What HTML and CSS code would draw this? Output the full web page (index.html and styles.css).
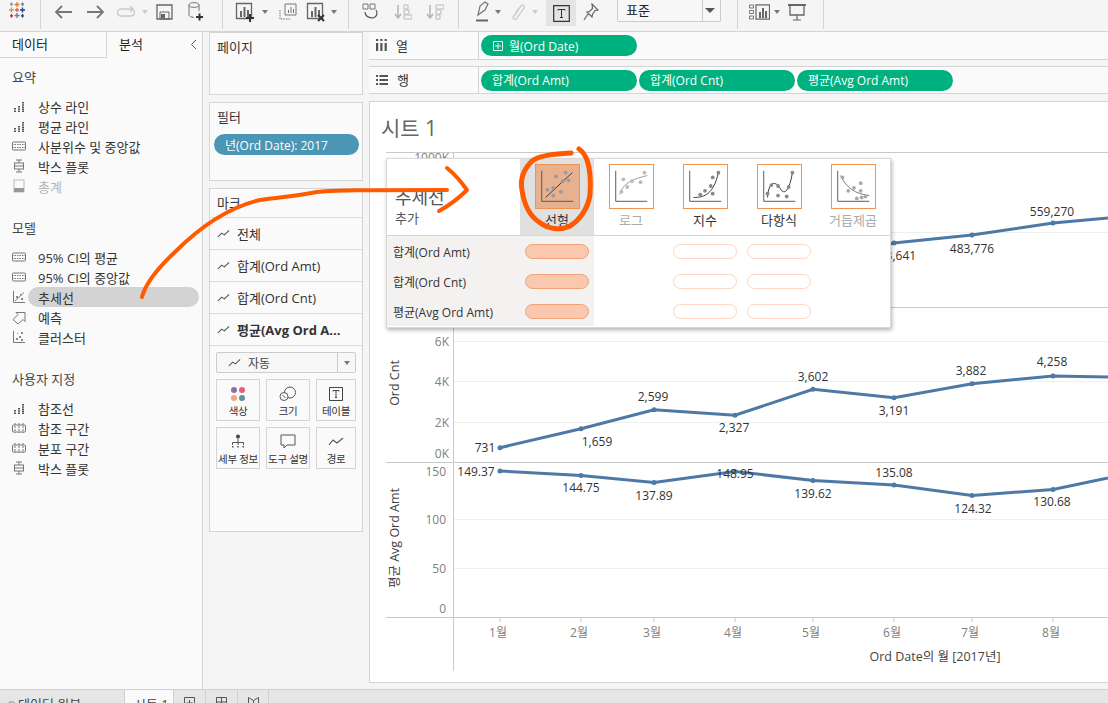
FILE: index.html
```html
<!DOCTYPE html>
<html lang="ko">
<head>
<meta charset="utf-8">
<title>시트 1</title>
<link rel="stylesheet" href="styles.css">
</head>
<body>
<svg class="defs" width="0" height="0">
  <symbol id="bars" viewBox="0 0 14 14"><path d="M2 9h2v1.500H2zM2 11.500h2V13H2zM6 7h2v1.500H6zM6 9.300h2v1.500H6zM6 11.500h2V13H6zM10 3h2v1.500h-2zM10 5.200h2v1.500h-2zM10 7.400h2v1.500h-2zM10 9.500h2V11h-2zM10 11.500h2V13h-2z" fill="#555"/></symbol>
  <symbol id="band" viewBox="0 0 14 14"><rect x="0.500" y="3" width="13" height="8" rx="1" fill="none" stroke="#777"/><path d="M0 5.500h14M0 8.500h14" stroke="#777" stroke-dasharray="1.500 1"/></symbol>
  <symbol id="ref2" viewBox="0 0 14 14"><rect x="0.500" y="4" width="13" height="7" rx="1" fill="none" stroke="#777"/><path d="M3 2v10M7 2v10M11 2v10" stroke="#777" stroke-dasharray="2 1"/></symbol>
  <symbol id="box" viewBox="0 0 14 14"><path d="M7 1v3M7 10v3M4 1h6M4 13h6" stroke="#777" fill="none"/><rect x="2.500" y="4" width="9" height="6" fill="none" stroke="#777"/><path d="M2.500 7h9" stroke="#777"/></symbol>
  <symbol id="trend" viewBox="0 0 14 14"><path d="M1.500 1v11.500H13" fill="none" stroke="#777"/><path d="M3 11L12 2.500" stroke="#777"/><path d="M4 6h2v2H4zM9 8h2v2H9zM8 4h1.500v1.500H8z" fill="#888"/></symbol>
  <symbol id="fore" viewBox="0 0 14 14"><path d="M1 9.500L6 4.500 4 2.500h9v9l-2-2-5 4.500z" fill="none" stroke="#777"/></symbol>
  <symbol id="cluster" viewBox="0 0 14 14"><path d="M1.500 1v11.500H13" fill="none" stroke="#777"/><path d="M4 8h2v2H4zM7 6h2v2H7zM9 2h2v2H9zM5 3h1v1H5zM9 9h2v2H9z" fill="#888"/></symbol>
  <symbol id="total" viewBox="0 0 14 14"><rect x="2" y="1" width="10" height="12" fill="none" stroke="#bbb"/><rect x="2" y="9" width="10" height="4" fill="#999"/></symbol>
  <symbol id="spark" viewBox="0 0 14 10"><path d="M1 8l4-4 3 2 5-5" fill="none" stroke="#555" stroke-width="1.100"/></symbol>
  <symbol id="scatter" viewBox="0 0 45 45"><path d="M6 6v32h33" fill="none" stroke="#555"/></symbol>
  <symbol id="chartbase" viewBox="0 0 20 20"><path d="M1.500 1.500h15v15h-15z" fill="none" stroke="#666" stroke-width="1.300"/><path d="M5 9h2v6H5zM8.500 5h2v10h-2zM12 8h2v7h-2z" fill="#666"/></symbol>
</svg>

<div class="app">
  <header class="toolbar">
    <div class="tgroup tg-logo">
      <svg class="logo" width="18" height="18" viewBox="0 0 18 18" stroke-width="1.300" fill="none">
        <path d="M9 1v5M6.500 3.500h5" stroke="#e8762d"/><path d="M9 12v5M6.500 14.500h5" stroke="#5b879b"/>
        <path d="M3.500 6.500v5M1 9h5" stroke="#eb912c"/><path d="M14.500 6.500v5M12 9h5" stroke="#1f447f"/>
        <path d="M14.500 1.500v3.500M13 3.200h3" stroke="#59879b"/><path d="M3.500 1.500v3.500M2 3.200h3" stroke="#7099a6"/>
        <path d="M3.500 13v3.500M2 14.800h3" stroke="#c72035"/><path d="M14.500 13v3.500M13 14.800h3" stroke="#1f447f"/>
        <path d="M9 7v4M7 9h4" stroke="#e15759"/>
      </svg>
    </div>
    <div class="tgroup tg-file">
      <span class="tool"><svg width="20" height="16" viewBox="0 0 20 16"><path d="M18 8H2M8 2L2 8l6 6" fill="none" stroke="#777" stroke-width="1.800"/></svg></span>
      <span class="tool"><svg width="20" height="16" viewBox="0 0 20 16"><path d="M2 8h16M12 2l6 6-6 6" fill="none" stroke="#777" stroke-width="1.800"/></svg></span>
      <span class="tool"><svg width="20" height="14" viewBox="0 0 20 14"><path d="M15 4H5a3.500 3.500 0 000 7h10a3.500 3.500 0 000-7M14 1l3 3-3 3" fill="none" stroke="#c9c9c9" stroke-width="1.300"/></svg></span>
      <i class="caret faint"></i>
      <span class="tool"><svg width="17" height="16" viewBox="0 0 17 16"><path d="M1 1h15v14H1z" fill="none" stroke="#666" stroke-width="1.300"/><path d="M4 8h9v7H4z" fill="none" stroke="#666"/><path d="M5 10h4v4H5z" fill="#666"/></svg></span>
      <span class="tool"><svg width="16" height="20" viewBox="0 0 16 20"><ellipse cx="6" cy="3" rx="5" ry="2.300" fill="none" stroke="#777"/><path d="M1 3v10c0 1.300 2 2.300 5 2.300M11 3v6" fill="none" stroke="#777"/><path d="M8 15h7M11.500 11.500v7" stroke="#333" stroke-width="2"/></svg></span>
    </div>
    <div class="tgroup tg-sheet">
      <span class="tool"><svg width="20" height="20" viewBox="0 0 20 20"><use href="#chartbase" width="20" height="20"/><path d="M11 16h8M15 12v8" stroke="#333" stroke-width="2"/></svg></span>
      <i class="caret"></i>
      <span class="tool t-gap"><svg width="18" height="18" viewBox="0 0 18 18"><path d="M6 1h11v11H6z" fill="#f5f5f5" stroke="#777"/><path d="M9 7h1v3H9zM11.500 4h1v6h-1zM14 6h1v4h-1z" fill="#777"/><path d="M1 7v9h11" fill="none" stroke="#777" stroke-dasharray="1.500 1"/></svg></span>
      <span class="tool t-narrow"><svg width="20" height="20" viewBox="0 0 20 20"><use href="#chartbase" width="20" height="20"/><path d="M12 13l6 6M18 13l-6 6" stroke="#333" stroke-width="2"/></svg></span>
      <i class="caret"></i>
    </div>
    <div class="tgroup tg-sort">
      <span class="tool"><svg width="18" height="18" viewBox="0 0 18 18"><path d="M1 1h5v5H1zM8 1h5v5H8z" fill="none" stroke="#777"/><path d="M3 9c0 5 5 6 9 6M14 7c2 3 1 7-3 8" fill="none" stroke="#555" stroke-width="1.200"/></svg></span>
      <span class="tool"><svg width="18" height="16" viewBox="0 0 18 16"><path d="M4 1v12M1 10l3 4 3-4" fill="none" stroke="#b5b5b5" stroke-width="1.500"/><path d="M10 1h4v4h-4zM10 6h5v4h-5zM10 11h8v4h-8z" fill="none" stroke="#bbb"/></svg></span>
      <span class="tool"><svg width="18" height="16" viewBox="0 0 18 16"><path d="M4 1v12M1 10l3 4 3-4" fill="none" stroke="#b5b5b5" stroke-width="1.500"/><path d="M10 1h8v4h-8zM10 6h5v4h-5zM10 11h4v4h-4z" fill="none" stroke="#bbb"/></svg></span>
    </div>
    <div class="tgroup tg-format">
      <span class="tool"><svg width="14" height="21" viewBox="0 0 14 21"><path d="M3 14L5 5l5-4 3 2-3 6z" fill="none" stroke="#777" stroke-width="1.200"/><path d="M1 19.500h12" stroke="#666" stroke-width="2"/></svg></span>
      <i class="caret"></i>
      <span class="tool"><svg width="14" height="19" viewBox="0 0 14 19"><path d="M4 8l5-6c2-2 4 0 3 2L5 14c-1 2-4 2-4-1l6-8" fill="none" stroke="#c9c9c9" stroke-width="1.300" transform="translate(0 2)"/></svg></span>
      <i class="caret faint"></i>
      <span class="tool t-active"><svg width="17" height="17" viewBox="0 0 17 17"><path d="M.700.700h15.600v15.600H.700z" fill="none" stroke="#333" stroke-width="1.200"/><path d="M5 5.500V4.500h7v1M8.500 4.500v8M7 12.500h3" fill="none" stroke="#333"/></svg></span>
      <span class="tool t-pin"><svg width="16" height="18" viewBox="0 0 16 18"><path d="M9 1l6 6-3 .5-2.500 4L9 14 4 9l2.500-.5 3-3zM5 11l-4 6" fill="none" stroke="#666" stroke-width="1.200"/></svg></span>
      <div class="select"><span class="select-value">표준</span><span class="select-arrow"><i class="caret dark"></i></span></div>
    </div>
    <div class="tgroup tg-show">
      <span class="tool t-show"><svg width="21" height="16" viewBox="0 0 21 16"><path d="M.500 1h4v3h-4zM.500 6.500h4v3h-4zM.500 12h4v3h-4z" fill="none" stroke="#777"/><path d="M7 .800h13.500v14.400H7z" fill="none" stroke="#666" stroke-width="1.200"/><path d="M10 8h2v6h-2zM13 4h2v10h-2zM16 7h2v7h-2z" fill="#666"/></svg></span>
      <i class="caret"></i>
      <span class="tool t-present"><svg width="18" height="18" viewBox="0 0 18 18"><path d="M0 2h18" stroke="#666" stroke-width="2"/><path d="M2 2v10h14V2" fill="none" stroke="#666" stroke-width="1.300"/><path d="M9 12v5M5 17h8" stroke="#666" stroke-width="1.200"/></svg></span>
    </div>
  </header>

  <main class="main">
    <aside class="analytics">
      <div class="tabs">
        <div class="tab tab-data">데이터</div>
        <div class="tab tab-active">분석<svg class="collapse" width="7" height="11" viewBox="0 0 7 11"><path d="M6 1L1.500 5.500 6 10" fill="none" stroke="#555"/></svg></div>
      </div>
      <section class="a-sec">
        <h3 class="a-head">요약</h3>
        <ul class="a-list">
          <li class="a-item"><svg class="a-ic"><use href="#bars"/></svg>상수 라인</li>
          <li class="a-item"><svg class="a-ic"><use href="#bars"/></svg>평균 라인</li>
          <li class="a-item"><svg class="a-ic"><use href="#band"/></svg>사분위수 및 중앙값</li>
          <li class="a-item"><svg class="a-ic"><use href="#box"/></svg>박스 플롯</li>
          <li class="a-item a-off"><svg class="a-ic"><use href="#total"/></svg>총계</li>
        </ul>
      </section>
      <section class="a-sec">
        <h3 class="a-head">모델</h3>
        <ul class="a-list">
          <li class="a-item"><svg class="a-ic"><use href="#band"/></svg>95% CI의 평균</li>
          <li class="a-item"><svg class="a-ic"><use href="#band"/></svg>95% CI의 중앙값</li>
          <li class="a-item a-hover"><svg class="a-ic"><use href="#trend"/></svg>추세선</li>
          <li class="a-item"><svg class="a-ic"><use href="#fore"/></svg>예측</li>
          <li class="a-item"><svg class="a-ic"><use href="#cluster"/></svg>클러스터</li>
        </ul>
      </section>
      <section class="a-sec">
        <h3 class="a-head">사용자 지정</h3>
        <ul class="a-list">
          <li class="a-item"><svg class="a-ic"><use href="#bars"/></svg>참조선</li>
          <li class="a-item"><svg class="a-ic"><use href="#ref2"/></svg>참조 구간</li>
          <li class="a-item"><svg class="a-ic"><use href="#ref2"/></svg>분포 구간</li>
          <li class="a-item"><svg class="a-ic"><use href="#box"/></svg>박스 플롯</li>
        </ul>
      </section>
    </aside>

    <div class="cards">
      <section class="card card-pages"><h4 class="card-title">페이지</h4></section>
      <section class="card card-filter">
        <h4 class="card-title">필터</h4>
        <div class="pill pill-filter">년(Ord Date): 2017</div>
      </section>
      <section class="card card-marks">
        <h4 class="card-title marks-title">마크</h4>
        <div class="mark-row"><svg class="spark"><use href="#spark"/></svg>전체</div>
        <div class="mark-row"><svg class="spark"><use href="#spark"/></svg>합계(Ord Amt)</div>
        <div class="mark-row"><svg class="spark"><use href="#spark"/></svg>합계(Ord Cnt)</div>
        <div class="mark-row mark-bold"><svg class="spark"><use href="#spark"/></svg>평균(Avg Ord A...</div>
        <div class="mark-body">
          <div class="mark-select"><span class="ms-value"><svg class="spark"><use href="#spark"/></svg>자동</span><span class="ms-arrow"><i class="caret"></i></span></div>
          <div class="mark-btns">
            <div class="mbtn">
              <svg width="16" height="16" viewBox="0 0 16 16"><circle cx="4" cy="4" r="3" fill="#8a6fa0"/><circle cx="12" cy="4" r="3" fill="#e5616b"/><circle cx="4" cy="12" r="3" fill="#eda77a"/><circle cx="12" cy="12" r="3" fill="#5f929d"/></svg>
              <span>색상</span>
            </div>
            <div class="mbtn">
              <svg width="18" height="16" viewBox="0 0 18 16"><circle cx="11" cy="6.500" r="5.500" fill="none" stroke="#555"/><circle cx="5" cy="10.500" r="4" fill="#fafafa" stroke="#555"/><path d="M3.500 9l3 3" stroke="#555"/></svg>
              <span>크기</span>
            </div>
            <div class="mbtn">
              <svg width="16" height="16" viewBox="0 0 16 16"><path d="M1.500 1.500h13v13h-13z" fill="none" stroke="#444"/><path d="M5 5.500V4.500h6v1M8 4.500v7M7 11.500h2" fill="none" stroke="#444"/></svg>
              <span>테이블</span>
            </div>
            <div class="mbtn">
              <svg width="14" height="16" viewBox="0 0 14 16"><circle cx="7" cy="2.500" r="2" fill="#444"/><path d="M7 4.500v4M1.500 11V8.500h11V11M7 8.500V11" fill="none" stroke="#555"/><path d="M1 12h1.500v1.500H1zM6.200 12h1.500v1.500H6.200zM11.500 12H13v1.500h-1.500z" fill="#555"/></svg>
              <span>세부 정보</span>
            </div>
            <div class="mbtn">
              <svg width="16" height="16" viewBox="0 0 16 16"><path d="M1 1h14v10H7l-3 3v-3H1z" fill="none" stroke="#555"/></svg>
              <span>도구 설명</span>
            </div>
            <div class="mbtn">
              <svg width="16" height="16" viewBox="0 0 16 12"><path d="M1 9l4-5 4 3 6-5" fill="none" stroke="#555" stroke-width="1.100"/></svg>
              <span>경로</span>
            </div>
          </div>
        </div>
      </section>
    </div>

    <div class="workspace">
      <div class="shelf shelf-col">
        <div class="shelf-label"><svg width="11" height="12" viewBox="0 0 11 12"><path d="M0 4h2.200v8H0zM4.300 4h2.200v8H4.300zM8.600 4h2.200v8H8.600zM0 0h2.200v2H0zM4.300 0h2.200v2H4.300zM8.600 0h2.200v2H8.600z" fill="#555"/></svg><span>열</span></div>
        <div class="shelf-pills"><div class="pill pill-green"><svg class="plus" width="10" height="10" viewBox="0 0 10 10"><path d="M.500.500h9v9h-9zM5 2v6M2 5h6" fill="none" stroke="#e8f5f1"/></svg>월(Ord Date)</div></div>
      </div>
      <div class="shelf shelf-row">
        <div class="shelf-label"><svg width="12" height="10" viewBox="0 0 12 10"><path d="M0 0h2v2H0zM0 4h2v2H0zM0 8h2v2H0zM3.500 0H12v2H3.500zM3.500 4H12v2H3.500zM3.500 8H12v2H3.500z" fill="#555"/></svg><span>행</span></div>
        <div class="shelf-pills">
          <div class="pill pill-green">합계(Ord Amt)</div>
          <div class="pill pill-green">합계(Ord Cnt)</div>
          <div class="pill pill-green">평균(Avg Ord Amt)</div>
        </div>
      </div>

      <section class="view">
        <h2 class="sheet-title">시트 1</h2>
        <svg class="chart" viewBox="370 147 738 535" width="738" height="535">
          <g class="grid">
            <path d="M454 232.500H1108M454 341.500H1108M454 381.500H1108M454 422.500H1108M454 519.500H1108M454 568.500H1108"/>
          </g>
          <g class="axis">
            <path d="M386 152.500H1108M386 307.500H1108M386 462.500H1108M386 617.500H1108M453.500 152V671"/>
            <path d="M500 617v5M581 617v5M654 617v5M735 617v5M813 617v5M894 617v5M972 617v5M1053 617v5"/>
          </g>
          <g class="ticks">
            <text x="449" y="162" text-anchor="end">1000K</text>
            <text x="449" y="346" text-anchor="end">6K</text>
            <text x="449" y="386" text-anchor="end">4K</text>
            <text x="449" y="427" text-anchor="end">2K</text>
            <text x="449" y="458" text-anchor="end">0K</text>
            <text x="446" y="476" text-anchor="end">150</text>
            <text x="446" y="524" text-anchor="end">100</text>
            <text x="446" y="573" text-anchor="end">50</text>
            <text x="446" y="613" text-anchor="end">0</text>
            <text x="498" y="637" text-anchor="middle">1월</text>
            <text x="579" y="637" text-anchor="middle">2월</text>
            <text x="652" y="637" text-anchor="middle">3월</text>
            <text x="733" y="637" text-anchor="middle">4월</text>
            <text x="811" y="637" text-anchor="middle">5월</text>
            <text x="892" y="637" text-anchor="middle">6월</text>
            <text x="970" y="637" text-anchor="middle">7월</text>
            <text x="1051" y="637" text-anchor="middle">8월</text>
          </g>
          <g class="axis-title">
            <text x="935" y="661" text-anchor="middle">Ord Date의 월 [2017년]</text>
            <text transform="translate(399 383) rotate(-90)" text-anchor="middle">Ord Cnt</text>
            <text transform="translate(399 538) rotate(-90)" text-anchor="middle">평균 Avg Ord Amt</text>
          </g>
          <g class="series">
            <path d="M810 262L894 243 972 235 1053 223 1108 218"/>
            <path d="M500 447.700L581 428.800 654 409.700 735 415.200 813 389.300 894 397.700 972 383.700 1053 376 1108 377"/>
            <path d="M500 471L581 475.600 654 482.400 735 471.500 813 480.500 894 485 972 495.500 1053 489.500 1108 478"/>
          </g>
          <g class="dots">
            <circle cx="894" cy="243" r="2.500"/><circle cx="972" cy="235" r="2.500"/><circle cx="1053" cy="223" r="2.500"/>
            <circle cx="500" cy="447.700" r="2.500"/><circle cx="581" cy="428.800" r="2.500"/><circle cx="654" cy="409.700" r="2.500"/><circle cx="735" cy="415.200" r="2.500"/><circle cx="813" cy="389.300" r="2.500"/><circle cx="894" cy="397.700" r="2.500"/><circle cx="972" cy="383.700" r="2.500"/><circle cx="1053" cy="376" r="2.500"/>
            <circle cx="500" cy="471" r="2.500"/><circle cx="581" cy="475.600" r="2.500"/><circle cx="654" cy="482.400" r="2.500"/><circle cx="735" cy="471.500" r="2.500"/><circle cx="813" cy="480.500" r="2.500"/><circle cx="894" cy="485" r="2.500"/><circle cx="972" cy="495.500" r="2.500"/><circle cx="1053" cy="489.500" r="2.500"/>
          </g>
          <g class="labels">
            <text x="894" y="260" text-anchor="middle">483,641</text>
            <text x="972" y="253" text-anchor="middle">483,776</text>
            <text x="1052" y="216" text-anchor="middle">559,270</text>
            <text x="485" y="452" text-anchor="middle">731</text>
            <text x="597" y="446" text-anchor="middle">1,659</text>
            <text x="653" y="401" text-anchor="middle">2,599</text>
            <text x="734" y="432" text-anchor="middle">2,327</text>
            <text x="813" y="381" text-anchor="middle">3,602</text>
            <text x="894" y="415" text-anchor="middle">3,191</text>
            <text x="971" y="375" text-anchor="middle">3,882</text>
            <text x="1052" y="366" text-anchor="middle">4,258</text>
            <text x="476" y="476" text-anchor="middle">149.37</text>
            <text x="581" y="492" text-anchor="middle">144.75</text>
            <text x="654" y="500" text-anchor="middle">137.89</text>
            <text x="735" y="478" text-anchor="middle">148.95</text>
            <text x="813" y="498" text-anchor="middle">139.62</text>
            <text x="894" y="477" text-anchor="middle">135.08</text>
            <text x="973" y="513" text-anchor="middle">124.32</text>
            <text x="1052" y="506" text-anchor="middle">130.68</text>
          </g>
        </svg>

        <div class="popover">
          <div class="pop-head">
            <div class="pop-title"><div class="pop-t1">추세선</div><div class="pop-t2">추가</div></div>
            <div class="pop-type pop-selected">
              <svg class="tile tile-on" viewBox="0 0 45 45"><use href="#scatter"/><path d="M10 34L38 8" stroke="#333" fill="none"/><g fill="#999"><circle cx="12" cy="26" r="2"/><circle cx="18" cy="24" r="2"/><circle cx="18" cy="32" r="2"/><circle cx="21" cy="12" r="2"/><circle cx="31" cy="8" r="2"/><circle cx="28" cy="17" r="2"/><circle cx="34" cy="16" r="2"/><circle cx="26" cy="28" r="2"/></g></svg>
              <span class="pop-label">선형</span>
            </div>
            <div class="pop-type pop-dim">
              <svg class="tile" viewBox="0 0 45 45"><use href="#scatter"/><path d="M10 31C14 18 24 15 39 11" stroke="#999" fill="none"/><g fill="#bbb"><circle cx="12" cy="28" r="2"/><circle cx="18" cy="23" r="2"/><circle cx="14" cy="15" r="2"/><circle cx="23" cy="17" r="2"/><circle cx="32" cy="18" r="2"/><circle cx="36" cy="8" r="2"/></g></svg>
              <span class="pop-label">로그</span>
            </div>
            <div class="pop-type">
              <svg class="tile" viewBox="0 0 45 45"><use href="#scatter"/><path d="M10 34C22 34 31 30 36 8" stroke="#333" fill="none"/><g fill="#888"><circle cx="17" cy="31" r="2"/><circle cx="22" cy="27" r="2"/><circle cx="28" cy="22" r="2"/><circle cx="30" cy="13" r="2"/><circle cx="36" cy="8" r="2"/><circle cx="30" cy="30" r="2"/></g></svg>
              <span class="pop-label">지수</span>
            </div>
            <div class="pop-type">
              <svg class="tile" viewBox="0 0 45 45"><use href="#scatter"/><path d="M10 34C11 15 20 17 24 26C30 33 34 20 36 8" stroke="#333" fill="none"/><g fill="#888"><circle cx="10" cy="30" r="2"/><circle cx="14" cy="21" r="2"/><circle cx="21" cy="22" r="2"/><circle cx="21" cy="32" r="2"/><circle cx="30" cy="33" r="2"/><circle cx="32" cy="23" r="2"/><circle cx="36" cy="8" r="2"/></g></svg>
              <span class="pop-label">다항식</span>
            </div>
            <div class="pop-type pop-dim">
              <svg class="tile" viewBox="0 0 45 45"><use href="#scatter"/><path d="M9 11C15 24 24 30 39 32" stroke="#777" fill="none"/><g fill="#aaa"><circle cx="11" cy="13" r="2"/><circle cx="17" cy="27" r="2"/><circle cx="23" cy="24" r="2"/><circle cx="30" cy="19" r="2"/><circle cx="26" cy="35" r="2"/><circle cx="31" cy="34" r="2"/><circle cx="35" cy="33" r="2"/><circle cx="30" cy="27" r="2"/></g></svg>
              <span class="pop-label">거듭제곱</span>
            </div>
          </div>
          <div class="pop-body">
            <div class="pop-row"><div class="pop-name">합계(Ord Amt)</div><div class="pop-cell pop-shade"><i class="tp tp-on"></i></div><div class="pop-cell"></div><div class="pop-cell"><i class="tp"></i></div><div class="pop-cell"><i class="tp"></i></div><div class="pop-cell"></div></div>
            <div class="pop-row"><div class="pop-name">합계(Ord Cnt)</div><div class="pop-cell pop-shade"><i class="tp tp-on"></i></div><div class="pop-cell"></div><div class="pop-cell"><i class="tp"></i></div><div class="pop-cell"><i class="tp"></i></div><div class="pop-cell"></div></div>
            <div class="pop-row"><div class="pop-name">평균(Avg Ord Amt)</div><div class="pop-cell pop-shade"><i class="tp tp-on"></i></div><div class="pop-cell"></div><div class="pop-cell"><i class="tp"></i></div><div class="pop-cell"><i class="tp"></i></div><div class="pop-cell"></div></div>
          </div>
        </div>
      </section>
    </div>
  </main>

  <footer class="statusbar">
    <div class="sb-source"><svg width="7" height="12" viewBox="0 0 11 12"><ellipse cx="5.500" cy="3" rx="4.500" ry="2" fill="none" stroke="#555"/><path d="M1 3v7h9V3" fill="none" stroke="#555"/></svg>데이터 원본</div>
    <div class="sb-tab">시트 1</div>
    <div class="sb-icon"><svg width="11" height="12" viewBox="0 0 11 12"><path d="M.500.500h10v11H.500zM5.500 3v6M2.500 6h6" fill="none" stroke="#555"/></svg></div>
    <div class="sb-icon"><svg width="11" height="12" viewBox="0 0 11 12"><path d="M.500.500h10v11H.500zM5.500.500v11M.500 5h10" fill="none" stroke="#555"/></svg></div>
    <div class="sb-icon"><svg width="11" height="12" viewBox="0 0 11 12"><path d="M.500.500l5 3 5-3v11h-10zM5.500 3.500v8" fill="none" stroke="#555"/></svg></div>
  </footer>

  <svg class="ink" width="1108" height="703" viewBox="0 0 1108 703">
    <path d="M142 297C146 282 160 266 175 252C195 232 225 208 260 200C280 197 290 197 317 192C340 190 360 190 447 190"/>
    <path d="M447 168C456 175 462 183 467 190C460 197 450 205 439 211"/>
    <path class="ink-ring" d="M571 153C555 154 540 155 532 161C523 170 520 180 522 190C524 204 530 216 539 222C548 229 560 231 570 226C580 220 588 208 590 195C591 180 590 168 587 160C585 155 582 151 579 149"/>
  </svg>
</div>
</body>
</html>
```

FILE: styles.css
```css
* { box-sizing: border-box; }
html, body { margin: 0; padding: 0; overflow: hidden; }
body {
  font-family: "Open Sans", "Noto Sans CJK KR", sans-serif;
  font-size: 12px;
  color: #333;
  background: #f5f5f5;
}
.defs { position: absolute; }
h2, h3, h4, ul { margin: 0; padding: 0; font-weight: 400; list-style: none; }

.app { position: relative; width: 1108px; height: 703px; display: flex; flex-direction: column; overflow: hidden; }

/* toolbar */
.toolbar { height: 32px; flex: none; display: flex; align-items: flex-start; background: #f5f5f5; border-bottom: 1px solid #d4d4d4; }
.tgroup { height: 29px; display: flex; align-items: flex-start; border-right: 1px solid #d4d4d4; }
.tool { width: 31px; height: 23px; flex: none; display: flex; align-items: center; justify-content: center; }
.caret { width: 0; height: 0; flex: none; border: 3.500px solid transparent; border-top: 4px solid #777; border-bottom: 0; margin-top: 10px; }
.caret.faint { border-top-color: #c9c9c9; }
.caret.dark { border-top-color: #555; border-width: 5px 5px 0; margin-top: 0; }
.tg-logo { width: 41px; padding: 1px 0 0 8px; }
.tg-file { width: 182px; padding-left: 7px; }
.tg-file .caret { margin-left: 1px; margin-right: 1px; }
.tg-sheet { width: 126px; padding-left: 6px; }
.tg-sheet .t-gap { margin-left: 2px; }
.tg-sheet .t-narrow { width: 26px; }
.tg-sheet .caret { margin: 10px 2px 0; }
.tg-sort { width: 110px; padding-left: 6px; gap: 1px; }
.tg-format { width: 279px; padding-left: 7px; }
.tg-format .caret { margin-left: -2px; margin-right: 2px; }
.tg-format .t-active { width: 30px; height: 26px; background: #e4e4e4; margin-left: 6px; }
.tg-format .t-pin { width: 29px; }
.select { width: 104px; height: 22px; margin-left: 12px; display: flex; background: #f7f7f7; border: 1px solid #ccc; border-top: 0; border-radius: 0 0 2px 2px; }
.select-value { flex: 1; padding: 0 0 0 8px; font-size: 13px; line-height: 20px; color: #222; }
.select-arrow { width: 18px; border-left: 1px solid #ccc; display: flex; align-items: center; justify-content: center; }
.tg-show { width: 86px; padding-left: 11px; }
.tg-show .t-show { width: 21px; }
.tg-show .caret { margin-left: 4px; margin-right: 2px; }
.tg-show .t-present { width: 30px; }

/* main */
.main { flex: 1; min-height: 0; display: flex; }

.analytics { width: 203px; flex: none; background: #fafafa; border-right: 1px solid #d4d4d4; }
.tabs { display: flex; height: 26px; font-size: 13px; color: #222; }
.tab { line-height: 24px; padding-left: 12px; }
.tab-data { width: 107px; border-right: 1px solid #d4d4d4; border-bottom: 1px solid #d4d4d4; }
.tab-active { flex: 1; position: relative; }
.collapse { position: absolute; right: 5px; top: 7px; }
.a-sec { padding-top: 9px; margin-bottom: 13px; }
.a-head { padding-left: 12px; font-size: 13px; line-height: 20px; color: #444; margin-bottom: 9px; }
.a-item { height: 20px; margin-left: 12px; display: flex; align-items: center; font-size: 13px; color: #333; white-space: nowrap; }
.a-ic { width: 14px; height: 14px; margin-right: 12px; flex: none; }
.a-off { color: #b5b5b5; }
.a-hover { position: relative; z-index: 0; }
.a-hover::before { content: ""; position: absolute; z-index: -1; left: 16px; right: 3px; top: 0; bottom: 0; background: #d3d3d3; border-radius: 10px; }

.cards { width: 166px; flex: none; padding: 0 6px; display: flex; flex-direction: column; gap: 7px; }
.card { background: #fafafa; border: 1px solid #d4d4d4; }
.card-pages { height: 63px; }
.card-filter { height: 79px; }
.card-marks { height: 344px; }
.card-title { padding: 5px 7px 0; font-size: 13px; line-height: 18px; color: #333; }
.pill { border-radius: 11px; color: #fff; font-size: 12px; white-space: nowrap; display: flex; align-items: center; }
.pill-filter { margin: 8px 3px 0 4px; height: 21px; padding-left: 11px; background: #4a96b4; }
.marks-title { height: 28px; }
.mark-row { height: 32px; display: flex; align-items: center; padding-left: 7px; border-top: 1px solid #dcdcdc; font-size: 13px; color: #333; white-space: nowrap; }
.mark-bold { font-weight: 700; }
.spark { width: 13px; height: 10px; margin-right: 7px; flex: none; }
.mark-body { border-top: 1px solid #dcdcdc; padding: 6px 6px 0; }
.mark-select { height: 21px; width: 140px; display: flex; border: 1px solid #ccc; border-radius: 2px; background: #f7f7f7; }
.ms-value { flex: 1; display: flex; align-items: center; padding-left: 11px; color: #444; font-size: 12px; }
.ms-arrow { width: 18px; border-left: 1px solid #ccc; display: flex; align-items: center; justify-content: center; }
.ms-arrow .caret { margin-top: 0; }
.mark-btns { margin-top: 6px; display: grid; grid-template-columns: 44px 44px 40px; column-gap: 6px; row-gap: 6px; }
.mbtn { height: 42px; border: 1px solid #d4d4d4; background: #fafafa; display: flex; flex-direction: column; align-items: center; padding-top: 6px; font-size: 10.500px; color: #333; white-space: nowrap; letter-spacing: -.3px; }
.mbtn svg { flex: none; }
.mbtn span { margin-top: 2px; line-height: 14px; }

.workspace { flex: 1; min-width: 0; display: flex; flex-direction: column; }
.shelf { display: flex; background: #fafafa; border-top: 1px solid #d4d4d4; border-bottom: 1px solid #d4d4d4; }
.shelf-col { height: 28px; border-top: 0; margin-bottom: 6px; }
.shelf-row { height: 29px; margin-bottom: 7px; }
.shelf-label { width: 110px; flex: none; border-right: 1px solid #d4d4d4; display: flex; align-items: center; gap: 9px; padding-left: 7px; font-size: 13px; color: #333; }
.shelf-pills { display: flex; gap: 2px; padding: 3px 0 0 2px; }
.pill-green { width: 156px; height: 21px; padding-left: 11px; background: #00b180; }
.shelf-col .pill-green { padding-left: 12px; }
.plus { margin-right: 6px; }

.view { position: relative; flex: 1; margin-bottom: 6px; background: #fff; border: 1px solid #d4d4d4; border-right: 0; }
.sheet-title { height: 45px; padding: 11px 0 0 11px; font-size: 21px; line-height: 30px; color: #666; }
.chart { display: block; }
.chart text { font-family: "Open Sans", "Noto Sans CJK KR", sans-serif; font-size: 12px; }
.grid path { stroke: #efefef; fill: none; }
.axis path { stroke: #c9c9c9; fill: none; }
.ticks text { fill: #808080; }
.chart .axis-title text { fill: #444; font-size: 12.500px; }
.series path { fill: none; stroke: #4e79a7; stroke-width: 3; }
.dots circle { fill: #4e79a7; }
.labels text { fill: #333; }

.popover { position: absolute; left: 16px; top: 56px; width: 505px; height: 170px; background: #fff; border: 1px solid #d8d8d8; box-shadow: 1px 2px 4px rgba(0,0,0,.3); }
.pop-head { height: 77px; display: flex; border-bottom: 1px solid #d4d4d4; }
.pop-title { width: 133px; padding: 26px 0 0 8px; color: #555; }
.pop-t1 { font-size: 18px; line-height: 24px; }
.pop-t2 { font-size: 13px; line-height: 18px; }
.pop-type { width: 74px; flex: none; display: flex; flex-direction: column; align-items: center; padding-top: 5px; }
.pop-selected { background: #e0e0e0; }
.tile { width: 45px; height: 45px; border: 1px solid #f2924f; background: #fff; }
.tile-on { background: #e7b08f; }
.pop-label { margin-top: 2px; font-size: 13px; line-height: 18px; color: #333; }
.pop-dim .pop-label { color: #aaa; }
.pop-row { display: flex; height: 30px; }
.pop-name { width: 133px; padding: 2px 0 0 6px; background: #f3f2f1; line-height: 30px; font-size: 12px; color: #333; white-space: nowrap; }
.pop-cell { width: 74px; display: flex; align-items: center; justify-content: center; }
.pop-shade { background: #f3f2f1; }
.tp { width: 64px; height: 15px; border: 1px solid #fcd6c0; border-radius: 8px; background: #fff; display: block; }
.tp-on { background: #f9c8ae; border-color: #f2a277; }

.statusbar { height: 14px; flex: none; display: flex; background: #e6e6e6; border-top: 1px solid #d0d0d0; overflow: hidden; font-size: 13px; color: #444; }
.sb-source { width: 124px; display: flex; gap: 3px; padding: 7px 0 0 8px; line-height: 14px; white-space: nowrap; }
.sb-source svg { flex: none; margin-top: 2px; }
.sb-tab { width: 49px; background: #fafafa; border-left: 1px solid #d0d0d0; padding: 7px 0 0 9px; line-height: 14px; white-space: nowrap; }
.sb-icon { width: 32px; border-left: 1px solid #d0d0d0; display: flex; justify-content: center; padding-top: 7px; }
.sb-icon:last-child { border-right: 1px solid #d0d0d0; }

.ink { position: absolute; left: 0; top: 0; pointer-events: none; }
.ink path { fill: none; stroke: #ff5a00; stroke-width: 4; stroke-linecap: round; stroke-linejoin: round; }
.ink .ink-ring { stroke-width: 5; }
```
